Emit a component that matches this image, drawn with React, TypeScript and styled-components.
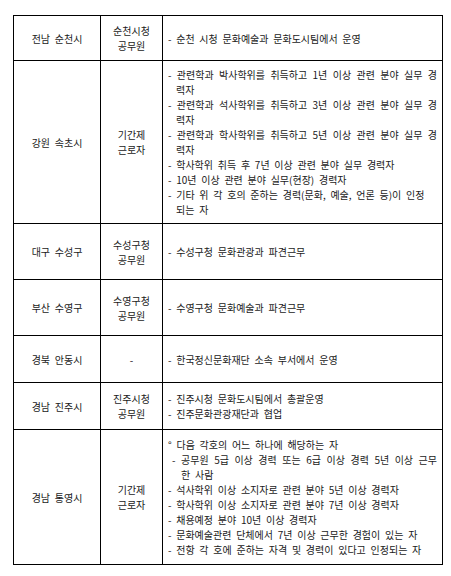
import React from "react";
import styled, { createGlobalStyle } from "styled-components";

const Global = createGlobalStyle`
  html, body { margin: 0; padding: 0; background: #fff; }
  body { font-family: "Noto Sans CJK KR", "Noto Sans", sans-serif; }
`;

const Page = styled.div`
  padding: 15px 0 0 13px;
`;

const Table = styled.table`
  border-collapse: collapse;
  table-layout: fixed;
  width: 429px;
  font-family: "Noto Sans CJK KR", "Noto Sans", sans-serif;
  font-size: 10px;
  line-height: 15px;
  word-spacing: 2.5px;
  color: #1a1a1a;
`;

const Cell = styled.td<{ $h?: number; $center?: boolean }>`
  border: 1px solid #000;
  padding: ${(p) => (p.$center ? "0" : "0 5px 0 5px")};
  height: ${(p) => (p.$h ? `${p.$h}px` : "auto")};
  text-align: ${(p) => (p.$center ? "center" : "left")};
  vertical-align: middle;
  box-sizing: border-box;
`;

const Line = styled.div<{ $justify?: boolean; $indent?: number }>`
  padding-left: ${(p) => p.$indent ?? 0}px;
  text-align: ${(p) => (p.$justify ? "justify" : "left")};
  text-align-last: ${(p) => (p.$justify ? "justify" : "left")};
  white-space: nowrap;
  overflow: hidden;
`;

type L = { t: string; j?: boolean; i?: number };
type Row = { region: string; role: string[]; h: number; lines: L[] };

const rows: Row[] = [
  {
    region: "전남 순천시",
    role: ["순천시청", "공무원"],
    h: 45,
    lines: [{ t: "- 순천 시청 문화예술과 문화도시팀에서 운영" }],
  },
  {
    region: "강원 속초시",
    role: ["기간제", "근로자"],
    h: 163,
    lines: [
      { t: "- 관련학과 박사학위를 취득하고 1년 이상 관련 분야 실무 경", j: true },
      { t: "력자", i: 8 },
      { t: "- 관련학과 석사학위를 취득하고 3년 이상 관련 분야 실무 경", j: true },
      { t: "력자", i: 8 },
      { t: "- 관련학과 학사학위를 취득하고 5년 이상 관련 분야 실무 경", j: true },
      { t: "력자", i: 8 },
      { t: "- 학사학위 취득 후 7년 이상 관련 분야 실무 경력자" },
      { t: "- 10년 이상 관련 분야 실무(현장) 경력자" },
      { t: "- 기타 위 각 호의 준하는 경력(문화, 예술, 언론 등)이 인정" },
      { t: "되는 자", i: 8 },
    ],
  },
  {
    region: "대구 수성구",
    role: ["수성구청", "공무원"],
    h: 56,
    lines: [{ t: "- 수성구청 문화관광과 파견근무" }],
  },
  {
    region: "부산 수영구",
    role: ["수영구청", "공무원"],
    h: 56,
    lines: [{ t: "- 수영구청 문화예술과 파견근무" }],
  },
  {
    region: "경북 안동시",
    role: ["-"],
    h: 47,
    lines: [{ t: "- 한국정신문화재단 소속 부서에서 운영" }],
  },
  {
    region: "경남 진주시",
    role: ["진주시청", "공무원"],
    h: 47,
    lines: [
      { t: "- 진주시청 문화도시팀에서 총괄운영" },
      { t: "- 진주문화관광재단과 협업" },
    ],
  },
  {
    region: "경남 통영시",
    role: ["기간제", "근로자"],
    h: 135,
    lines: [
      { t: "° 다음 각호의 어느 하나에 해당하는 자" },
      { t: "- 공무원 5급 이상 경력 또는 6급 이상 경력 5년 이상 근무", j: true, i: 4 },
      { t: "한 사람", i: 13 },
      { t: "- 석사학위 이상 소지자로 관련 분야 5년 이상 경력자" },
      { t: "- 학사학위 이상 소지자로 관련 분야 7년 이상 경력자" },
      { t: "- 채용예정 분야 10년 이상 경력자" },
      { t: "- 문화예술관련 단체에서 7년 이상 근무한 경험이 있는 자" },
      { t: "- 전항 각 호에 준하는 자격 및 경력이 있다고 인정되는 자" },
    ],
  },
];

export default function App() {
  return (
    <>
      <Global />
      <Page>
        <Table>
          <colgroup>
            <col style={{ width: 87 }} />
            <col style={{ width: 62 }} />
            <col style={{ width: 280 }} />
          </colgroup>
          <tbody>
            {rows.map((r, idx) => (
              <tr key={idx}>
                <Cell $h={r.h} $center>
                  {r.region}
                </Cell>
                <Cell $h={r.h} $center>
                  {r.role.map((x, k) => (
                    <div key={k}>{x}</div>
                  ))}
                </Cell>
                <Cell $h={r.h}>
                  {r.lines.map((l, k) => (
                    <Line key={k} $justify={l.j} $indent={l.i}>
                      {l.t}
                    </Line>
                  ))}
                </Cell>
              </tr>
            ))}
          </tbody>
        </Table>
      </Page>
    </>
  );
}
